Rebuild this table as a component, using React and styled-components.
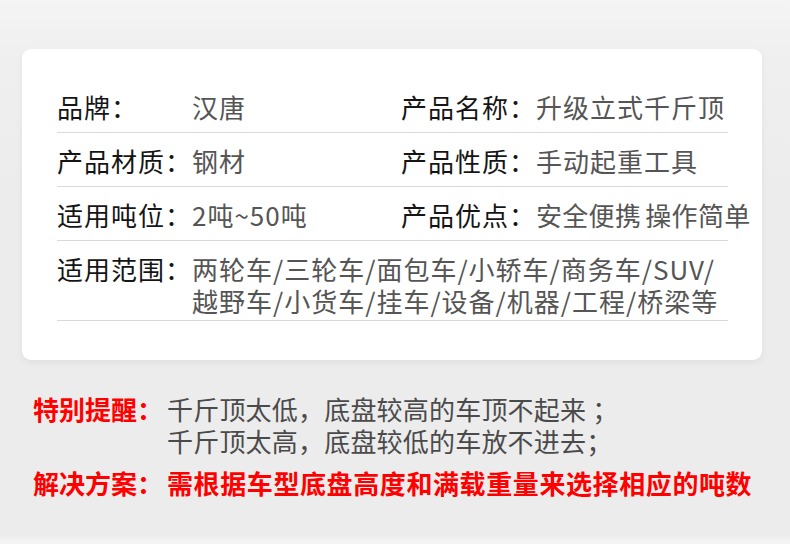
import React from 'react'
import styled, { createGlobalStyle } from 'styled-components'

const GlobalStyle = createGlobalStyle`
  html, body {
    margin: 0;
    padding: 0;
    background: #ececec;
  }
  body {
    font-family: "Noto Sans CJK SC", "Noto Sans", sans-serif;
  }
`

const specs = [
    [
        { label: '品牌：', value: '汉唐' },
        { label: '产品名称：', value: '升级立式千斤顶' },
    ],
    [
        { label: '产品材质：', value: '钢材' },
        { label: '产品性质：', value: '手动起重工具' },
    ],
    [
        { label: '适用吨位：', value: '2吨~50吨' },
        { label: '产品优点：', value: '安全便携 操作简单', tight: true },
    ],
]

const App = () => {
    return (
        <Page>
            <GlobalStyle />
            <Card>
                {specs.map((row, i) => (
                    <Row key={i}>
                        {row.map((cell, j) => (
                            <Cell key={j} $first={j === 0}>
                                <Label>{cell.label}</Label>
                                <Value $tight={cell.tight}>{cell.value}</Value>
                            </Cell>
                        ))}
                    </Row>
                ))}
                <Row $tall>
                    <Cell>
                        <Label>适用范围：</Label>
                        <Value>
                            <Line>两轮车/三轮车/面包车/小轿车/商务车/SUV/</Line>
                            <Line>越野车/小货车/挂车/设备/机器/工程/桥梁等</Line>
                        </Value>
                    </Cell>
                </Row>
            </Card>
            <Notes>
                <NoteRow>
                    <NoteLabel>特别提醒：</NoteLabel>
                    <NoteText>
                        <Line>千斤顶太低，底盘较高的车顶不起来 ；</Line>
                        <Line>千斤顶太高，底盘较低的车放不进去；</Line>
                    </NoteText>
                </NoteRow>
                <NoteRow $gap>
                    <NoteLabel>解决方案：</NoteLabel>
                    <NoteText $red>需根据车型底盘高度和满载重量来选择相应的吨数</NoteText>
                </NoteRow>
            </Notes>
        </Page>
    )
}

const Page = styled.div`
    width: 790px;
    height: 544px;
    box-sizing: border-box;
    padding: 49px 28px 0 22px;
    background: linear-gradient(180deg, #f4f4f4 0px, #efefef 60px, #ececec 200px, #ececec 536px, #f4f4f4 540px);
    overflow: hidden;
`

const Card = styled.div`
    background: #ffffff;
    border-radius: 9px;
    box-shadow: 0 3px 6px rgba(0, 0, 0, 0.05);
    padding: 30px 34px 39px 35px;
`

const Row = styled.div`
    display: flex;
    border-bottom: 1px solid #d9d9d9;
    padding: ${p => p.$tall ? '12px 0 3px' : '12px 0 9px'};
    font-size: 26px;
    line-height: 32px;
    letter-spacing: 1px;
    white-space: nowrap;
`

const Cell = styled.div`
    display: flex;
    width: ${p => p.$first ? '344px' : 'auto'};
    flex-shrink: 0;
`

const Label = styled.div`
    width: 135px;
    flex-shrink: 0;
    color: #151515;
`

const Value = styled.div`
    color: #555555;
    letter-spacing: ${p => p.$tight ? '0.3px' : '1px'};
    word-spacing: ${p => p.$tight ? '-2px' : '0'};
`

const Line = styled.div`
    height: 32px;
`

const Notes = styled.div`
    padding: 33px 0 0 11px;
`

const NoteRow = styled.div`
    display: flex;
    margin-top: ${p => p.$gap ? '10px' : '0'};
    font-size: 26px;
    line-height: 32px;
    white-space: nowrap;
`

const NoteLabel = styled.div`
    width: 134px;
    flex-shrink: 0;
    color: #ff0000;
    font-weight: 700;
`

const NoteText = styled.div`
    color: ${p => p.$red ? '#ff0000' : '#4a4a4a'};
    font-weight: ${p => p.$red ? 700 : 400};
    letter-spacing: ${p => p.$red ? '0.6px' : '0.2px'};
`

export default App
